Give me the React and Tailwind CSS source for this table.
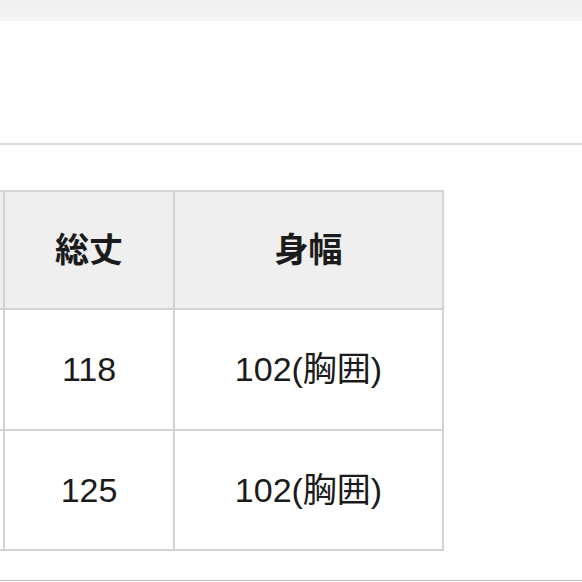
import React from 'react';

const ROWS = [
  { length: '118', width: '102(胸囲)', h: 'h-[121px]' },
  { length: '125', width: '102(胸囲)', h: 'h-[120px]' },
];

const cell = 'flex items-center justify-center border-r-2 border-b-2 border-[#d3d3d3]';

export default function App() {
  return (
    <div
      className="w-[582px] h-[582px] overflow-hidden bg-white text-[#1b1b1b]"
      style={{ fontFamily: '"Liberation Sans", "Noto Sans CJK JP", sans-serif' }}
    >
      {/* top bar */}
      <div className="h-[21px] bg-gradient-to-b from-[#f1f1f1] to-[#f3f3f3]" />
      <div className="h-[122px]" />
      <div className="h-[2px] bg-[#dcdcdc]" />
      <div className="h-[45px]" />

      {/* size table */}
      <div className="ml-[-100px] w-fit border-t-2 border-[#d3d3d3]">
        <div className="flex h-[118px] bg-[#efefef] font-bold">
          <div className={`${cell} w-[105px]`} />
          <div className={`${cell} w-[170px] text-[34px]`}>総丈</div>
          <div className={`${cell} w-[269px] text-[34px]`}>身幅</div>
        </div>
        {ROWS.map((row, i) => (
          <div key={i} className={`flex ${row.h} bg-white`}>
            <div className={`${cell} w-[105px]`} />
            <div className={`${cell} w-[170px] text-[34px]`}>{row.length}</div>
            <div className={`${cell} w-[269px] text-[34px]`}>{row.width}</div>
          </div>
        ))}
      </div>

      <div className="h-[29px]" />
      <div className="h-px bg-[#bdbdbd]" />
    </div>
  );
}
